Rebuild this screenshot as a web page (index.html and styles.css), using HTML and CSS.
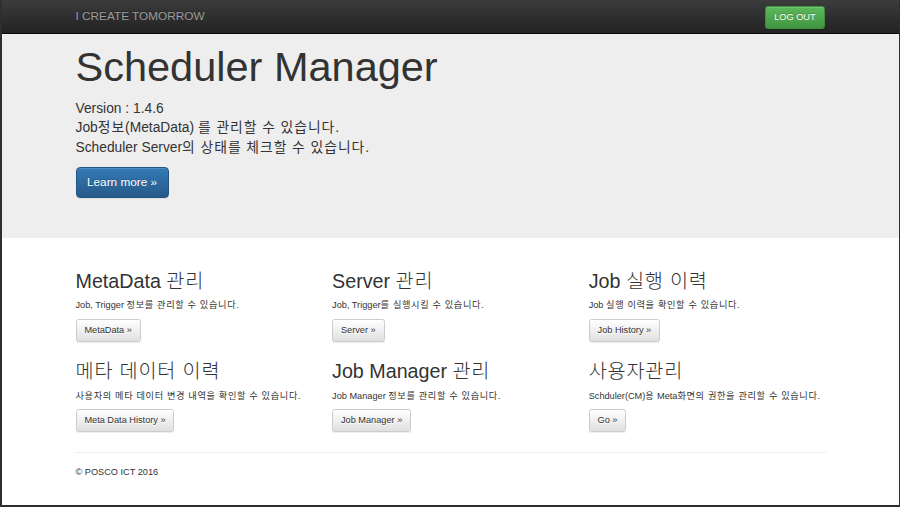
FILE: index.html
```html
<!DOCTYPE html>
<html lang="ko">
<head>
<meta charset="utf-8">
<title>Scheduler Manager</title>
<link rel="stylesheet" href="styles.css">
</head>
<body>
<div class="frame">
  <nav class="navbar">
    <div class="container nav-inner">
      <a class="brand" href="#">I CREATE TOMORROW</a>
      <button class="btn btn-success" type="button">LOG OUT</button>
    </div>
  </nav>

  <header class="jumbotron">
    <div class="container">
      <h1>Scheduler Manager</h1>
      <p class="lead">Version : 1.4.6<br>Job<span class="ko">정보</span>(MetaData) <span class="ko">를 관리할 수 있습니다</span>.<br>Scheduler Server<span class="ko">의 상태를 체크할 수 있습니다</span>.</p>
      <p class="lead-action"><a class="btn btn-primary btn-lg" href="#">Learn more &raquo;</a></p>
    </div>
  </header>

  <main class="container">
    <div class="grid">
      <section class="card">
        <h2>MetaData <span class="ko">관리</span></h2>
        <p>Job, Trigger <span class="ko">정보를 관리할 수 있습니다</span>.</p>
        <p><a class="btn btn-default" href="#">MetaData &raquo;</a></p>
      </section>
      <section class="card">
        <h2>Server <span class="ko">관리</span></h2>
        <p>Job, Trigger<span class="ko">를 실행시킬 수 있습니다</span>.</p>
        <p><a class="btn btn-default" href="#">Server &raquo;</a></p>
      </section>
      <section class="card">
        <h2>Job <span class="ko">실행 이력</span></h2>
        <p>Job <span class="ko">실행 이력을 확인할 수 있습니다</span>.</p>
        <p><a class="btn btn-default" href="#">Job History &raquo;</a></p>
      </section>
      <section class="card">
        <h2><span class="ko">메타 데이터 이력</span></h2>
        <p><span class="ko">사용자의 메타 데이터 변경 내역을 확인할 수 있습니다</span>.</p>
        <p><a class="btn btn-default" href="#">Meta Data History &raquo;</a></p>
      </section>
      <section class="card">
        <h2>Job Manager <span class="ko">관리</span></h2>
        <p>Job Manager <span class="ko">정보를 관리할 수 있습니다</span>.</p>
        <p><a class="btn btn-default" href="#">Job Manager &raquo;</a></p>
      </section>
      <section class="card">
        <h2><span class="ko">사용자관리</span></h2>
        <p>Schduler(CM)<span class="ko">용</span> Meta<span class="ko">화면의 권한을 관리할 수 있습니다</span>.</p>
        <p><a class="btn btn-default" href="#">Go &raquo;</a></p>
      </section>
    </div>
    <hr class="rule">
    <footer class="footer">
      <p>&copy; POSCO ICT 2016</p>
    </footer>
  </main>
</div>
</body>
</html>
```

FILE: styles.css
```css
* {
  box-sizing: border-box;
}

html,
body {
  margin: 0;
  height: 100%;
}

body {
  font-family: "Liberation Sans", Arial, "Noto Sans CJK KR", sans-serif;
  font-size: 9.2px;
  line-height: 1.4286;
  color: #333;
  background: #fff;
}

/* hangul runs are set a little looser than the latin text */
.ko {
  letter-spacing: 0.07em;
}

h1 .ko,
h2 .ko {
  font-weight: 300;
  letter-spacing: 0.04em;
}

.frame {
  min-height: 100%;
  border-left: 2px solid #2e2e2e;
  border-right: 1px solid #2e2e2e;
  border-bottom: 2px solid #2e2e2e;
}

.container {
  width: 750px;
  margin: 0 auto;
}

/* top bar */
.navbar {
  height: 34px;
  background: linear-gradient(to bottom, #3c3c3c 0, #222 100%);
  border-bottom: 1px solid #080808;
}

.nav-inner {
  display: flex;
  align-items: flex-start;
  justify-content: space-between;
  height: 100%;
}

.brand {
  color: #9d9d9d;
  font-size: 11.8px;
  line-height: 33px;
  text-decoration: none;
  text-shadow: 0 -1px 0 rgba(0, 0, 0, .25);
}

.nav-inner .btn {
  margin-top: 5.6px;
  margin-right: 1px;
}

/* buttons */
.btn {
  display: inline-block;
  font-family: inherit;
  font-size: 9.2px;
  line-height: 1.4286;
  padding: 3.95px 7.9px;
  border: 1px solid transparent;
  border-radius: 2.6px;
  text-decoration: none;
  cursor: pointer;
  vertical-align: middle;
  box-shadow: inset 0 1px 0 rgba(255, 255, 255, .15), 0 1px 1px rgba(0, 0, 0, .075);
}

.btn-success {
  color: #fff;
  background: linear-gradient(to bottom, #5cb85c 0, #419641 100%);
  border-color: #3e8f3e;
  text-shadow: 0 -1px 0 rgba(0, 0, 0, .2);
}

.btn-default {
  color: #333;
  background: linear-gradient(to bottom, #fff 0, #e0e0e0 100%);
  border-color: #ccc;
  text-shadow: 0 1px 0 #fff;
}

.btn-primary {
  color: #fff;
  background: linear-gradient(to bottom, #337ab7 0, #265a88 100%);
  border-color: #245580;
  text-shadow: 0 -1px 0 rgba(0, 0, 0, .2);
}

.btn-lg {
  font-size: 11.8px;
  line-height: 1.3333;
  padding: 6.6px 10.5px;
  border-radius: 4px;
}

/* hero */
.jumbotron {
  background: #eee;
  padding: 10px 0 29.6px;
  margin-bottom: 19.7px;
}

.jumbotron .container {
  padding-left: 0;
}

.jumbotron h1 {
  font-size: 41.5px;
  font-weight: 400;
  line-height: 1.1;
  margin: 0 0 9.1px;
}

.jumbotron p {
  font-size: 13.8px;
  line-height: 1.4286;
  margin: 0 0 9.9px;
}

.jumbotron .lead {
  margin-bottom: 9.5px;
}

/* feature grid */
.grid {
  display: grid;
  grid-template-columns: repeat(3, 236.9px);
  column-gap: 19.7px;
  margin-right: -19.7px;
}

.card h2 {
  font-size: 19.7px;
  font-weight: 400;
  line-height: 1.1;
  margin: 13.2px 0 6.6px;
}

.card p {
  margin: 0 0 6.6px;
}

.rule {
  border: 0;
  border-top: 1px solid #eee;
  margin: 13.2px 0;
}

.footer p {
  margin: 0 0 6.6px;
}
```
